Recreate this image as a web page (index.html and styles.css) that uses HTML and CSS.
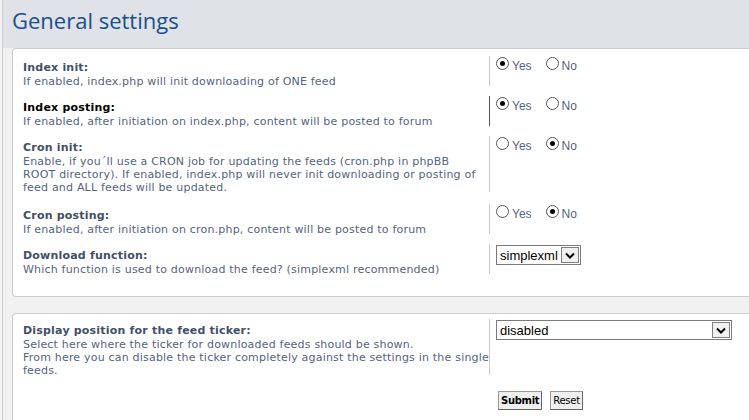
FILE: index.html
```html
<!DOCTYPE html>
<html>
<head>
<meta charset="utf-8">
<link rel="stylesheet" href="styles.css">
</head>
<body>
<div class="page">
  <div class="side"></div>
  <div class="main">
    <div class="header"><h1 class="title">General settings</h1></div>
    <div class="panel panel-first">
      <div class="row">
        <div class="dt"><div class="label">Index init:</div><div class="explain">If enabled, index.php will init downloading of ONE feed</div></div>
        <div class="dd">
          <label class="opt"><span class="radio checked"></span>Yes</label>
          <label class="opt"><span class="radio"></span>No</label>
        </div>
      </div>
      <div class="row">
        <div class="dt"><div class="label label-active">Index posting:</div><div class="explain">If enabled, after initiation on index.php, content will be posted to forum</div></div>
        <div class="dd dd-active">
          <label class="opt"><span class="radio checked"></span>Yes</label>
          <label class="opt"><span class="radio"></span>No</label>
        </div>
      </div>
      <div class="row row-tall">
        <div class="dt"><div class="label">Cron init:</div><div class="explain explain-narrow">Enable, if you´ll use a CRON job for updating the feeds (cron.php in phpBB ROOT directory). If enabled, index.php will never init downloading or posting of feed and ALL feeds will be updated.</div></div>
        <div class="dd">
          <label class="opt"><span class="radio"></span>Yes</label>
          <label class="opt"><span class="radio checked"></span>No</label>
        </div>
      </div>
      <div class="row">
        <div class="dt"><div class="label">Cron posting:</div><div class="explain">If enabled, after initiation on cron.php, content will be posted to forum</div></div>
        <div class="dd">
          <label class="opt"><span class="radio"></span>Yes</label>
          <label class="opt"><span class="radio checked"></span>No</label>
        </div>
      </div>
      <div class="row">
        <div class="dt"><div class="label">Download function:</div><div class="explain">Which function is used to download the feed? (simplexml recommended)</div></div>
        <div class="dd">
          <div class="select select-small"><span class="select-text">simplexml</span><span class="arrow"><svg width="10" height="7" viewBox="0 0 10 7"><path d="M1 1.5 L5 5.5 L9 1.5" fill="none" stroke="#000" stroke-width="2"/></svg></span></div>
        </div>
      </div>
    </div>
    <div class="panel panel-second">
      <div class="row">
        <div class="dt"><div class="label">Display position for the feed ticker:</div><div class="explain">Select here where the ticker for downloaded feeds should be shown.<br>From here you can disable the ticker completely against the settings in the single feeds.</div></div>
        <div class="dd">
          <div class="select select-wide"><span class="select-text">disabled</span><span class="arrow"><svg width="10" height="7" viewBox="0 0 10 7"><path d="M1 1.5 L5 5.5 L9 1.5" fill="none" stroke="#000" stroke-width="2"/></svg></span></div>
        </div>
      </div>
      <div class="buttons">
        <button class="btn btn-submit">Submit</button>
        <button class="btn">Reset</button>
      </div>
    </div>
  </div>
</div>
</body>
</html>
```
FILE: styles.css
```css
html, body {
  margin: 0;
  padding: 0;
  overflow: hidden;
  width: 749px;
  height: 420px;
  background: #f1f1f1;
}
body {
  font-family: "DejaVu Sans", Verdana, sans-serif;
  font-size: 11px;
}
.page {
  display: flex;
  height: 420px;
}
.side {
  width: 2px;
  flex: none;
  background: #f3f3f3;
  border-right: 1px solid #c9cdd2;
}
.main {
  flex: 1;
  min-width: 0;
  background: #f1f1f1;
}
.header {
  background: #dfe2e7;
  height: 48px;
  padding-left: 9px;
  box-sizing: border-box;
}
.title {
  margin: 0;
  padding-top: 5px;
  font-family: "Open Sans", sans-serif;
  font-weight: normal;
  font-size: 22px;
  line-height: 30px;
  color: #1a4f8e;
}
.panel {
  background: #fff;
  border: 1px solid #cccccc;
  border-right: none;
  border-radius: 4px 0 0 4px;
  margin-left: 9px;
  margin-right: -20px;
  padding: 3px 0 0 10px;
}
.panel-first {
  padding-bottom: 16px;
}
.panel-second {
  margin-top: 16px;
  padding-top: 1px;
  height: 200px;
}
.row {
  display: flex;
  padding: 4px 0;
}
.row-tall {
  padding-bottom: 6px;
}
.dt {
  width: 466px;
  flex: none;
  padding: 5px 0 0;
  line-height: 13px;
  letter-spacing: 0.2px;
}
.label {
  font-weight: bold;
  color: #425067;
  margin-bottom: 1px;
}
.label-active {
  color: #000;
}
.explain {
  color: #536482;
}
.explain-narrow {
  padding-right: 6px;
}
.dd {
  border-left: 1px solid #cccccc;
  padding-left: 6px;
  margin-bottom: 2px;
  display: flex;
  align-items: flex-start;
  padding-top: 1px;
}
.dd-active {
  border-left-color: #555;
}
.opt {
  display: flex;
  align-items: baseline;
  font-family: "Liberation Sans", Arial, sans-serif;
  font-size: 12px;
  color: #536482;
  margin-right: 14px;
  line-height: 15px;
}
.radio {
  width: 11px;
  height: 11px;
  border: 1px solid #555;
  border-radius: 50%;
  margin-right: 3px;
  position: relative;
  box-sizing: content-box;
  background: #fff;
}
.radio.checked::after {
  content: "";
  position: absolute;
  left: 3px;
  top: 3px;
  width: 5px;
  height: 5px;
  border-radius: 50%;
  background: #000;
}
.select {
  display: flex;
  align-items: center;
  justify-content: space-between;
  border: 1px solid #7a7a7a;
  height: 20px;
  box-sizing: border-box;
  background: #fff;
  font-family: "Liberation Sans", Arial, sans-serif;
  font-size: 13px;
  color: #000;
  padding: 0 1px 0 3px;
}
.select-small {
  width: 85px;
  margin-top: 0;
}
.select-wide {
  width: 236px;
  margin-top: 0;
}
.arrow {
  width: 16px;
  height: 14px;
  border: 1px solid #808080;
  background: #f0f0f0;
  display: flex;
  align-items: center;
  justify-content: center;
}
.buttons {
  padding: 10px 0 0 475px;
  display: flex;
  gap: 8px;
}
.btn {
  font-family: "DejaVu Sans", Verdana, sans-serif;
  font-size: 10px;
  letter-spacing: -0.3px;
  color: #000;
  background: #efefef;
  border: 1px solid #666;
  border-top-color: #999;
  border-left-color: #999;
  height: 19px;
  padding: 0 2px;
  margin: 0;
}
.btn-submit {
  font-weight: bold;
}
```
